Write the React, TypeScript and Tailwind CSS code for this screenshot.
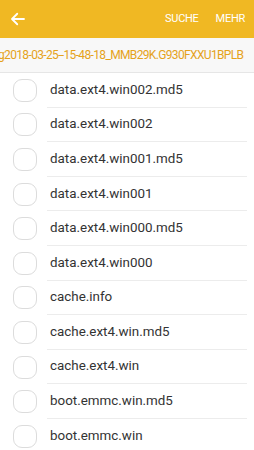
const files = [
  "data.ext4.win002.md5",
  "data.ext4.win002",
  "data.ext4.win001.md5",
  "data.ext4.win001",
  "data.ext4.win000.md5",
  "data.ext4.win000",
  "cache.info",
  "cache.ext4.win.md5",
  "cache.ext4.win",
  "boot.emmc.win.md5",
  "boot.emmc.win",
];

export default function App() {
  return (
    <div className="w-[254px] h-[450px] overflow-hidden bg-white font-['Roboto',sans-serif]">
      {/* toolbar */}
      <div className="h-[38px] bg-[#f0b823] flex items-center pl-[9px] pr-[9px]">
        <svg width="18" height="18" viewBox="0 0 24 24" fill="none" stroke="#fff" strokeWidth="2.4" strokeLinecap="round" strokeLinejoin="round">
          <path d="M20 12H5" />
          <path d="M11 5l-7 7 7 7" />
        </svg>
        <div className="ml-auto flex gap-[17px] text-[11px] text-white tracking-tight">
          <span>SUCHE</span>
          <span>MEHR</span>
        </div>
      </div>

      {/* path */}
      <div className="h-[35px] bg-[#f8f8f8] border-b border-[#e6e6e6] flex items-center overflow-hidden whitespace-nowrap">
        <span className="-ml-[2px] text-[12px] tracking-[-0.65px] text-[#e5a21b]">g2018-03-25--15-48-18_MMB29K.G930FXXU1BPLB</span>
      </div>

      {/* list */}
      <div>
        {files.map((f) => (
          <div key={f} className="h-[34.6px] flex items-center relative">
            <div className="ml-[13px] w-[24px] h-[23px] rounded-[9px] border-[1.5px] border-[#dcdcdc] bg-white" />
            <div className="flex-1 ml-[10px] mr-[7px] h-full flex items-center border-b border-[#ececec]">
              <span className="ml-[3px] text-[13.4px] text-[#333]">{f}</span>
            </div>
          </div>
        ))}
      </div>
    </div>
  );
}
